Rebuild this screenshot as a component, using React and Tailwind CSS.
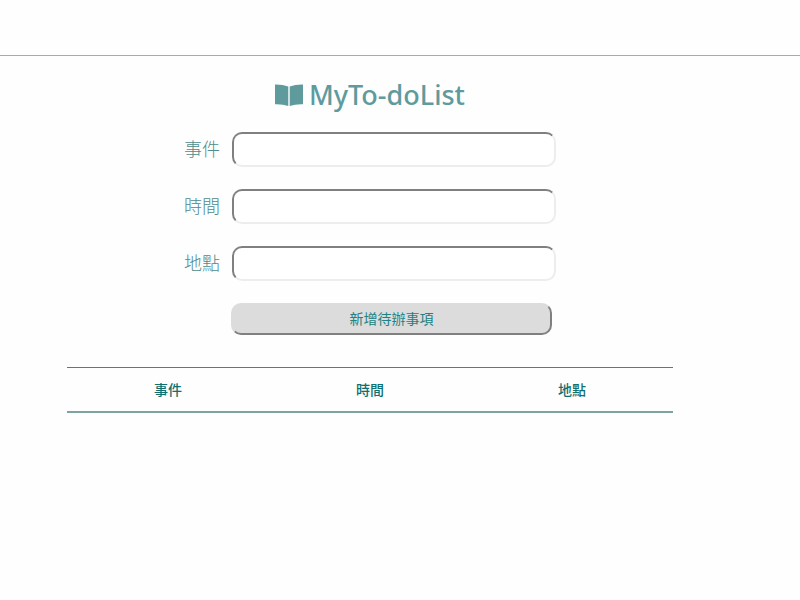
const fields = [
  { id: "event", label: "事件" },
  { id: "time", label: "時間" },
  { id: "place", label: "地點" },
];

function BookIcon() {
  return (
    <svg
      viewBox="0 0 28 28"
      className="h-7 w-7"
      fill="currentColor"
      aria-hidden="true"
    >
      <path d="M0 3.4 Q7.500 3.200 13.300 5.600 V25 Q7.500 23 0 23.300 Z" />
      <path d="M28 3.400 Q20.500 3.200 14.700 5.600 V25 Q20.500 23 28 23.300 Z" />
    </svg>
  );
}

function Field({ id, label }) {
  return (
    <div className="flex items-center gap-3">
      <label
        htmlFor={id}
        className="w-9 shrink-0 pb-0.5 text-lg font-light whitespace-nowrap text-[#4f8c8c]"
      >
        {label}
      </label>
      <input
        id={id}
        type="text"
        className="h-[35px] min-w-0 flex-1 rounded-[10px] border-2 border-t-[#808080] border-r-[#ededed] border-b-[#ededed] border-l-[#808080] bg-white px-2 text-[#008080]"
      />
    </div>
  );
}

export default function App() {
  return (
    <div className="min-h-screen bg-[#fefefe] font-['Noto_Sans','Noto_Sans_CJK_TC',sans-serif]">
      <header className="h-14 border-b border-[#a9a9a9]" />
      <main className="mr-[127px] ml-[67px] pt-5">
        <h1 className="flex items-center justify-center gap-1.5 text-[27px] leading-[38px] font-medium text-[#5f9b9d]">
          <BookIcon />
          MyTo-doList
        </h1>
        <form
          className="mx-auto mt-[18px] flex max-w-[372px] flex-col gap-[22px]"
          onSubmit={(e) => e.preventDefault()}
        >
          {fields.map((field) => (
            <Field key={field.id} {...field} />
          ))}
          <button
            type="submit"
            className="mr-1 ml-[47px] h-8 rounded-[10px] border-2 border-t-[#dcdcdc] border-r-[#808080] border-b-[#808080] border-l-[#dcdcdc] bg-[#dcdcdc] text-sm text-[#208282]"
          >
            新增待辦事項
          </button>
        </form>
        <table className="mt-8 w-full table-fixed border-t border-b-2 border-t-[#438484] border-b-[#7da3a3] text-sm text-[#107070]">
          <thead>
            <tr className="h-11">
              <th scope="col" className="pt-0.5 font-medium">事件</th>
              <th scope="col" className="pt-0.5 font-medium">時間</th>
              <th scope="col" className="pt-0.5 font-medium">地點</th>
            </tr>
          </thead>
        </table>
      </main>
    </div>
  );
}
